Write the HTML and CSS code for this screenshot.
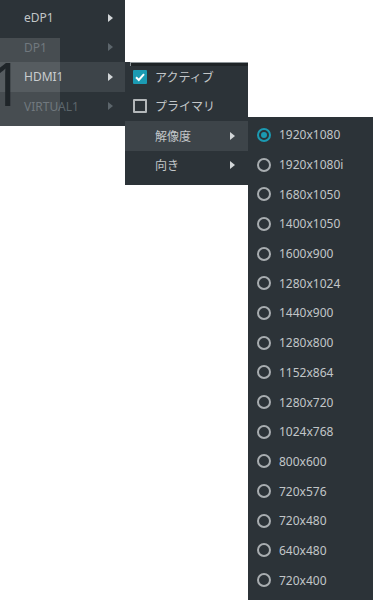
FILE: index.html
```html
<!DOCTYPE html>
<html lang="ja">
<head>
    <meta charset="UTF-8">
    <meta name="viewport" content="width=device-width, initial-scale=1.0">
    <link rel="stylesheet" href="styles.css">
</head>
<body>
    <div class="menu outputs">
        <div class="item"><span class="label">eDP1</span><span class="arrow"></span></div>
        <div class="item disabled"><span class="label">DP1</span><span class="arrow"></span></div>
        <div class="item hover"><span class="label">HDMI1</span><span class="arrow"></span></div>
        <div class="item disabled"><span class="label">VIRTUAL1</span><span class="arrow"></span></div>
    </div>

    <!-- screen identify window, sits over the menu -->
    <div class="identify"><span>1</span></div>

    <div class="menu output-options">
        <div class="frame-edge"></div>
        <div class="item"><span class="check on"><svg width="14" height="14" viewBox="0 0 14 14"><path d="M3 7.2 L5.8 10 L11 4.2" fill="none" stroke="#fff" stroke-width="2"/></svg></span><span class="label">アクティブ</span></div>
        <div class="item"><span class="check"></span><span class="label">プライマリ</span></div>
        <div class="item hover"><span class="label">解像度</span><span class="arrow"></span></div>
        <div class="item"><span class="label">向き</span><span class="arrow"></span></div>
    </div>

    <div class="menu modes">
        <div class="item"><span class="radio on"></span><span class="label">1920x1080</span></div>
        <div class="item"><span class="radio"></span><span class="label">1920x1080i</span></div>
        <div class="item"><span class="radio"></span><span class="label">1680x1050</span></div>
        <div class="item"><span class="radio"></span><span class="label">1400x1050</span></div>
        <div class="item"><span class="radio"></span><span class="label">1600x900</span></div>
        <div class="item"><span class="radio"></span><span class="label">1280x1024</span></div>
        <div class="item"><span class="radio"></span><span class="label">1440x900</span></div>
        <div class="item"><span class="radio"></span><span class="label">1280x800</span></div>
        <div class="item"><span class="radio"></span><span class="label">1152x864</span></div>
        <div class="item"><span class="radio"></span><span class="label">1280x720</span></div>
        <div class="item"><span class="radio"></span><span class="label">1024x768</span></div>
        <div class="item"><span class="radio"></span><span class="label">800x600</span></div>
        <div class="item"><span class="radio"></span><span class="label">720x576</span></div>
        <div class="item"><span class="radio"></span><span class="label">720x480</span></div>
        <div class="item"><span class="radio"></span><span class="label">640x480</span></div>
        <div class="item"><span class="radio"></span><span class="label">720x400</span></div>
    </div>
</body>
</html>
```

FILE: styles.css
```css
body {
    margin: 0;
    background: #fff;
    font-family: "Noto Sans", "Noto Sans CJK JP", sans-serif;
    font-size: 12px;
    overflow: hidden;
}

.menu {
    position: absolute;
    background: #2c3338;
    color: #c2c6c8;
    box-sizing: border-box;
}
.menu .item {
    display: flex;
    align-items: center;
    height: 29.5px;
}
.menu .label {
    flex: 1;
}
.menu .hover {
    background: #3d4449;
}
.menu .disabled {
    color: #5c656b;
}

.arrow {
    width: 0;
    height: 0;
    border-left: 5px solid #d2d6d8;
    border-top: 4px solid transparent;
    border-bottom: 4px solid transparent;
}
.disabled .arrow {
    border-left-color: #5c656b;
}

/* first menu: outputs */
.outputs {
    left: 0;
    top: 0;
    width: 125px;
    height: 126px;
    padding-top: 3px;
}
.outputs .item {
    padding: 0 12px 0 24px;
}

.identify {
    position: absolute;
    left: 0;
    top: 38px;
    width: 60px;
    height: 88px;
    background: rgba(255, 255, 255, 0.13);
    overflow: hidden;
}
.identify span {
    position: absolute;
    left: -11px;
    top: 15px;
    font-size: 60px;
    line-height: 1;
    color: #1f2529;
}

/* second menu: output options */
.output-options {
    left: 125px;
    top: 62px;
    width: 123px;
    height: 123px;
}
.output-options .item {
    padding: 0 13px 0 8px;
}
.output-options .item .label {
    padding-left: 22px;
}
.output-options .check + .label {
    padding-left: 8px;
}
.frame-edge {
    position: absolute;
    left: 5px;
    right: 0;
    top: 0;
    height: 4px;
    background: #1f2427;
    border-top: 1px solid #8e9599;
    border-left: 1px solid #8e9599;
    box-sizing: border-box;
}
.check {
    width: 14px;
    height: 14px;
    box-sizing: border-box;
    border: 2px solid #b4b8ba;
    border-radius: 1px;
}
.check svg {
    display: block;
    margin: -2px;
}
.check.on {
    background: #1b9ab2;
    border-color: #1b9ab2;
}

/* third menu: modes */
.modes {
    left: 248px;
    top: 117px;
    width: 125px;
    height: 483px;
    padding-top: 3px;
}
.modes .item {
    height: 29.7px;
    padding-left: 9px;
}
.radio {
    width: 14px;
    height: 14px;
    box-sizing: border-box;
    border: 2px solid #a8adb0;
    border-radius: 50%;
    margin-right: 8px;
    position: relative;
}
.radio.on {
    border-color: #1b9ab2;
}
.radio.on::after {
    content: "";
    position: absolute;
    left: 2px;
    top: 2px;
    width: 6px;
    height: 6px;
    border-radius: 50%;
    background: #1b9ab2;
}
```
